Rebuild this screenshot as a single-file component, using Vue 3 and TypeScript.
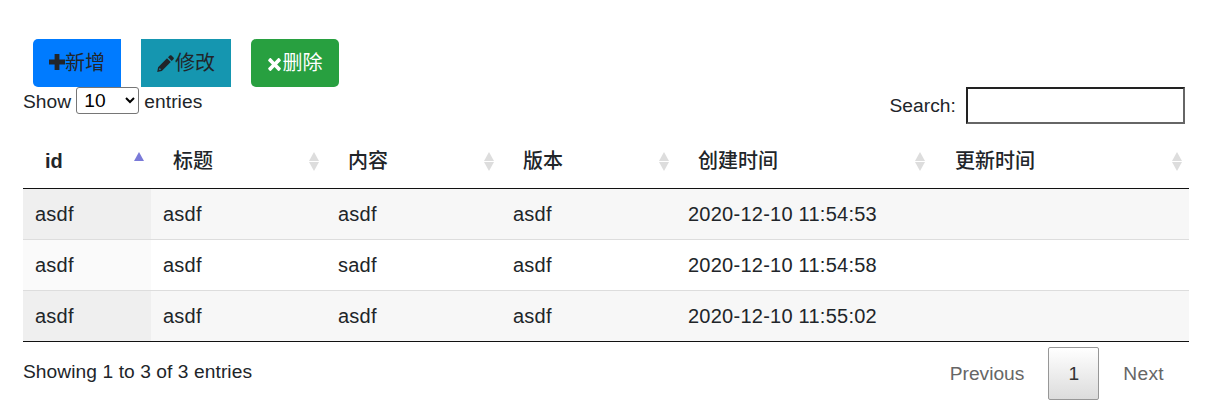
<script setup lang="ts">
const rows = [
  ['asdf', 'asdf', 'asdf', 'asdf', '2020-12-10 11:54:53', ''],
  ['asdf', 'asdf', 'sadf', 'asdf', '2020-12-10 11:54:58', ''],
  ['asdf', 'asdf', 'asdf', 'asdf', '2020-12-10 11:55:02', ''],
]
const heads = ['id', '标题', '内容', '版本', '创建时间', '更新时间']
</script>

<template>
  <div class="page">
    <div class="toolbar">
      <button class="btn blue">
        <svg class="ico" viewBox="0 0 16 16"><path d="M5.6 0h4.8v5.6H16v4.8h-5.6V16H5.6v-5.6H0V5.6h5.6z" fill="currentColor" /></svg>新增
      </button>
      <button class="btn teal">
        <svg class="ico pencil" viewBox="0 0 17 17"><path d="M12.8.5c.5-.5 1.2-.5 1.7 0l2 2c.5.5.5 1.2 0 1.7l-1.8 1.8L11 2.3zM10 3.3 13.7 7l-8.9 8.9L.2 17l.9-4.8zM2.7 12.9l-.7 2.2 2.2-.5z" fill="currentColor" fill-rule="evenodd" /></svg>修改
      </button>
      <button class="btn green">
        <svg class="ico small" viewBox="0 0 14 14"><path d="M3.2 0.4 7 4.2 10.8.4c.4-.4 1-.4 1.4 0l1.4 1.4c.4.4.4 1 0 1.4L9.8 7l3.8 3.8c.4.4.4 1 0 1.4l-1.4 1.4c-.4.4-1 .4-1.4 0L7 9.8l-3.8 3.8c-.4.4-1 .4-1.4 0L.4 12.2c-.4-.4-.4-1 0-1.4L4.2 7 .4 3.2c-.4-.4-.4-1 0-1.4L1.8.4c.4-.4 1-.4 1.4 0z" fill="currentColor" /></svg>删除
      </button>
    </div>

    <div class="controls">
      <label class="length">Show
        <select class="select"><option>10</option><option>25</option></select>
        entries</label>
      <label class="search">Search:<input class="input" type="text" /></label>
    </div>

    <table class="table">
      <colgroup>
        <col style="width: 128px" /><col style="width: 175px" /><col style="width: 175px" />
        <col style="width: 175px" /><col style="width: 257px" /><col style="width: 256px" />
      </colgroup>
      <thead>
        <tr>
          <th v-for="(h, i) in heads" :key="h" :class="{ first: i === 0 }">
            {{ h }}
            <span class="sort" :class="{ active: i === 0 }"><i class="up"></i><i v-if="i !== 0" class="down"></i></span>
          </th>
        </tr>
      </thead>
      <tbody>
        <tr v-for="(r, ri) in rows" :key="ri" :class="{ odd: ri % 2 === 0 }">
          <td v-for="(c, ci) in r" :key="ci" :class="{ sorted: ci === 0 }">{{ c }}</td>
        </tr>
      </tbody>
    </table>

    <div class="footer">
      <div class="info">Showing 1 to 3 of 3 entries</div>
      <div class="pager">
        <span class="pg prev">Previous</span>
        <span class="pg current">1</span>
        <span class="pg next">Next</span>
      </div>
    </div>
  </div>
</template>

<style>
html, body { margin: 0; background: #fff; }
</style>

<style scoped>
.page {
  box-sizing: border-box;
  width: 1228px;
  height: 420px;
  padding: 39px 39px 0 23px;
  font-family: "Liberation Sans", "Noto Sans CJK SC", sans-serif;
  font-size: 19.2px;
  letter-spacing: 0.07px;
  color: #212529;
  overflow: hidden;
}
.toolbar { display: flex; gap: 20px; padding-left: 10px; height: 48px; }
.btn {
  display: flex; align-items: center; justify-content: center;
  height: 48px; padding: 0 0 3px; box-sizing: border-box; border: 0; color: #212529;
  font: inherit; font-size: 20px; letter-spacing: 0;
}
.blue { width: 88px; background: #007bff; border-radius: 5px 0 0 5px; }
.teal { width: 90px; background: #1596b0; }
.green { width: 88px; background: #28a040; color: #fff; border-radius: 5px; }
.ico { width: 16px; height: 16px; flex: none; }
.ico.pencil { width: 17px; height: 17px; margin: 3px 1px 0 0; }
.ico.small { width: 13px; height: 13px; margin: 5px 2px 0 0; }
.controls { display: flex; justify-content: space-between; height: 51px; }
.length { height: 29px; display: flex; align-items: center; gap: 5px; }
.select {
  align-self: flex-start;
  width: 63px; height: 27px; box-sizing: border-box; background: #fff;
  border: 1px solid #767676; border-radius: 3px; padding: 0 0 0 3px;
  font: inherit; color: #000;
}
.search { display: flex; align-items: center; height: 37px; margin-right: 4px; }
.input {
  box-sizing: border-box; width: 219px; height: 37px; margin-left: 10px;
  border: 2px solid; border-color: #222 #666 #666 #222; padding: 0; background: #fff;
}
.table { border-collapse: separate; border-spacing: 0; table-layout: fixed; width: 1166px; font-size: 20px; letter-spacing: 0.25px; }
th {
  position: relative; height: 46px; padding: 0 0 4px 22px; text-align: left;
  font-weight: 700; border-bottom: 1px solid #111; box-sizing: content-box; letter-spacing: 0;
}
th:not(.first) { font-weight: 500; height: 43px; padding-bottom: 7px; }
td { height: 49px; padding: 1px 0 0 12px; border-bottom: 1px solid #ddd; box-sizing: content-box; }
tr:last-child td { border-bottom-color: #111; }
.odd td { background: #f7f7f7; }
.odd td.sorted { background: #efefef; }
td.sorted { background: #fafafa; }
.sort { position: absolute; right: 6px; top: 14px; width: 11px; height: 20px; display: block; }
th:nth-child(5) .sort { right: 7px; }
.sort i { position: absolute; left: 0; border-left: 5.5px solid transparent; border-right: 5.5px solid transparent; }
.sort .up { top: 0; border-bottom: 9px solid #ddd; }
.sort .down { top: 10px; border-top: 9px solid #ddd; }
.sort.active .up { border-bottom-color: #7a7ad8; }
.footer { display: flex; justify-content: space-between; width: 1166px; padding-top: 5px; }
.info { line-height: 50px; }
.pager { display: flex; align-items: center; height: 53px; color: #666; }
.pg { padding: 0 25px 0 24px; line-height: 51px; }
.prev { padding-right: 24px; letter-spacing: 0; }
.next { letter-spacing: 0.3px; }
.current {
  box-sizing: border-box; width: 51px; height: 53px; padding: 0; text-align: center;
  color: #333; border: 1px solid #979797; border-radius: 2px;
  background: linear-gradient(to bottom, #fff 0%, #dcdcdc 100%);
}
</style>
